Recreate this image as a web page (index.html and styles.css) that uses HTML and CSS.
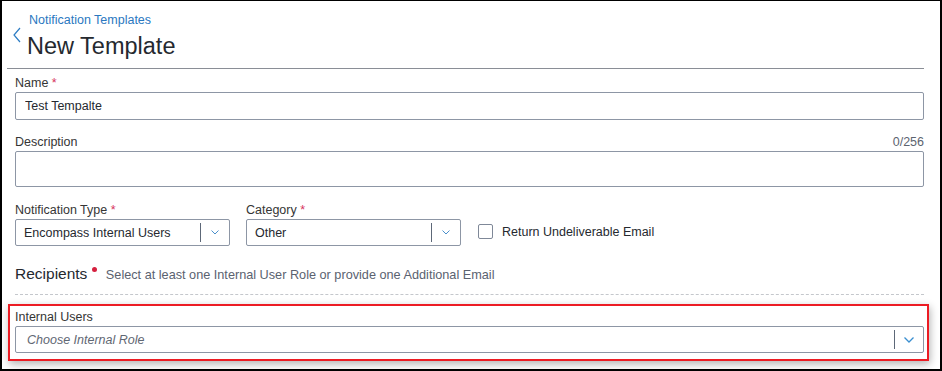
FILE: index.html
```html
<!DOCTYPE html>
<html lang="en">

<head>
  <meta charset="UTF-8">
  <meta name="viewport" content="width=device-width, initial-scale=1.0">
  <title>New Template</title>
  <link rel="stylesheet" href="styles.css">
</head>

<body>
  <div class="page">
    <div class="header">
      <a class="back" href="#">
        <svg width="8" height="16" viewBox="0 0 8 16">
          <path d="M7 1 L1 8 L7 15" fill="none" stroke="#2d7dc4" stroke-width="1.2" />
        </svg>
      </a>
      <div class="titles">
        <a class="crumb" href="#">Notification Templates</a>
        <h1>New Template</h1>
      </div>
    </div>

    <form class="form">
      <div class="field field-name">
        <label class="label">Name <span class="req">*</span></label>
        <input class="input" type="text" value="Test Tempalte">
      </div>

      <div class="field field-desc">
        <div class="label-row">
          <label class="label">Description</label>
          <span class="counter">0/256</span>
        </div>
        <textarea class="input textarea"></textarea>
      </div>

      <div class="row">
        <div class="field">
          <label class="label">Notification Type <span class="req">*</span></label>
          <div class="select small">
            <span class="value">Encompass Internal Users</span>
            <span class="divider"></span>
            <span class="arrow">
              <svg width="8" height="5" viewBox="0 0 8 5">
                <path d="M0.5 0.5 L4 4 L7.5 0.5" fill="none" stroke="#4a8fcb" stroke-width="1" />
              </svg>
            </span>
          </div>
        </div>
        <div class="field">
          <label class="label">Category <span class="req">*</span></label>
          <div class="select small">
            <span class="value">Other</span>
            <span class="divider"></span>
            <span class="arrow">
              <svg width="8" height="5" viewBox="0 0 8 5">
                <path d="M0.5 0.5 L4 4 L7.5 0.5" fill="none" stroke="#4a8fcb" stroke-width="1" />
              </svg>
            </span>
          </div>
        </div>
        <label class="check">
          <span class="box"></span>
          <span>Return Undeliverable Email</span>
        </label>
      </div>

      <div class="recipients">
        <span class="section-title">Recipients</span><span class="dot"></span>
        <span class="hint">Select at least one Internal User Role or provide one Additional Email</span>
      </div>

      <div class="highlight">
        <label class="label">Internal Users</label>
        <div class="select">
          <span class="value placeholder">Choose Internal Role</span>
          <span class="divider"></span>
          <span class="arrow">
            <svg width="10" height="6" viewBox="0 0 10 6">
              <path d="M0.5 0.5 L5 5 L9.5 0.5" fill="none" stroke="#3a8fd0" stroke-width="1.3" />
            </svg>
          </span>
        </div>
      </div>
    </form>
  </div>
</body>

</html>
```

FILE: styles.css
```css
html,
body {
  height: 100%;
}

body {
  margin: 0;
  box-sizing: border-box;
  border: 2px solid #000;
  border-top-width: 1px;
  background-color: #ffffff;
  color: #353535;
  font-family: 'Liberation Sans', Arial, sans-serif;
  font-size: 12.5px;
  overflow: hidden;
}

.page {
  padding: 0 16px 0 5px;
}

/* header */
.header {
  display: flex;
  padding-top: 11px;
  padding-bottom: 8px;
  border-bottom: 1px solid #8a8e96;
}

.back {
  display: block;
  margin: 15px 6px 0 6px;
  height: 16px;
}

.back svg {
  display: block;
}

.crumb {
  display: block;
  padding-left: 2px;
  color: #2a78bf;
  font-size: 12.5px;
  line-height: 16px;
  text-decoration: none;
  margin-bottom: 4px;
}

h1 {
  margin: 0;
  font-size: 23.5px;
  line-height: 28px;
  font-weight: normal;
  color: #25292f;
}

/* form */
.form {
  padding-left: 8px;
}

.field-name {
  margin-top: 7px;
}

.field-desc {
  margin-top: 15px;
}

.label {
  display: block;
  line-height: 15px;
  margin-bottom: 1px;
  color: #353535;
}

.label-row {
  display: flex;
  justify-content: space-between;
  line-height: 15px;
  margin-bottom: 1px;
}

.label-row .label {
  margin-bottom: 0;
}

.counter {
  color: #5c6470;
}

.req {
  color: #d6335e;
}

.input {
  display: block;
  box-sizing: border-box;
  width: 100%;
  height: 28px;
  margin: 0;
  padding: 0 9px;
  border: 1px solid #8d96a5;
  border-radius: 2px;
  font-family: inherit;
  font-size: 12.5px;
  color: #25292f;
  outline: none;
}

.textarea {
  height: 36px;
  resize: none;
}

.row {
  display: flex;
  align-items: flex-start;
  gap: 16px;
  margin-top: 16px;
}

.select {
  display: flex;
  align-items: center;
  box-sizing: border-box;
  height: 27px;
  border: 1px solid #8d96a5;
  border-radius: 2px;
  color: #25292f;
}

.select.small {
  width: 215px;
}

.select .value {
  flex: 1;
  padding-left: 8px;
  white-space: nowrap;
  overflow: hidden;
}

.select .placeholder {
  padding-left: 11px;
  font-style: italic;
  color: #5f6773;
}

.divider {
  width: 1px;
  height: 19px;
  background-color: #5d6878;
}

.arrow {
  display: flex;
  justify-content: center;
  align-items: center;
  width: 28px;
}

.arrow svg {
  display: block;
}

.check {
  display: flex;
  align-items: center;
  margin-top: 21px;
  margin-left: 1px;
  color: #25292f;
}

.box {
  display: block;
  width: 15px;
  height: 15px;
  box-sizing: border-box;
  border: 1px solid #7f8898;
  border-radius: 2px;
  margin-right: 9px;
}

/* recipients */
.recipients {
  margin-top: 18px;
  padding-bottom: 9px;
  border-bottom: 1px dashed #c4c7cc;
  line-height: 20px;
}

.section-title {
  font-size: 15.5px;
  color: #25292f;
}

.dot {
  display: inline-block;
  width: 5px;
  height: 5px;
  border-radius: 50%;
  background-color: #d5203f;
  vertical-align: top;
  margin: 3px 0 0 5px;
}

.hint {
  margin-left: 5px;
  font-size: 12.7px;
  color: #5a6270;
}

/* highlighted box */
.highlight {
  margin: 9px -5px 0 -7px;
  padding: 4px 3px 6px 5px;
  border: 2px solid #ec1c24;
  box-shadow: 1px 3px 8px rgba(0, 0, 0, 0.3);
}

.highlight .select {
  height: 27px;
}
```
